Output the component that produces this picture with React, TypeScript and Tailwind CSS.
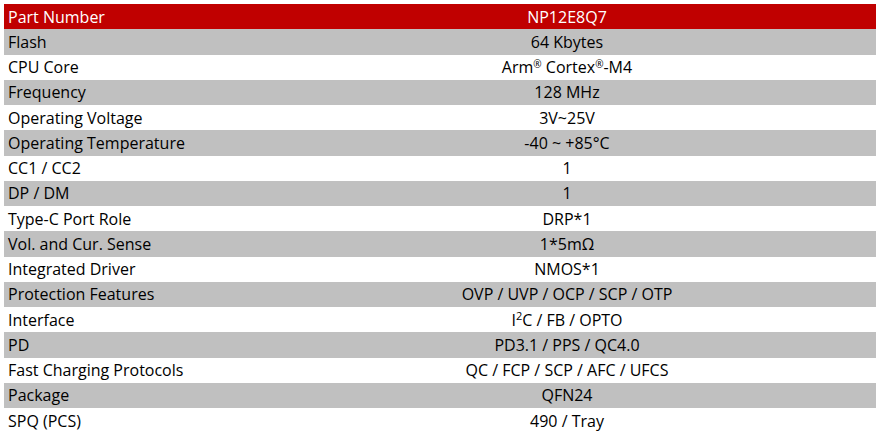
import React from 'react';

type Row = { label: string; value: React.ReactNode };

const Reg = () => <sup className="text-[10px]">®</sup>;

const rows: Row[] = [
  { label: 'Flash', value: '64 Kbytes' },
  { label: 'CPU Core', value: <>Arm<Reg /> Cortex<Reg />-M4</> },
  { label: 'Frequency', value: '128 MHz' },
  { label: 'Operating Voltage', value: '3V~25V' },
  { label: 'Operating Temperature', value: '-40 ~ +85°C' },
  { label: 'CC1 / CC2', value: '1' },
  { label: 'DP / DM', value: '1' },
  { label: 'Type-C Port Role', value: 'DRP*1' },
  { label: 'Vol. and Cur. Sense', value: '1*5mΩ' },
  { label: 'Integrated Driver', value: 'NMOS*1' },
  { label: 'Protection Features', value: 'OVP / UVP / OCP / SCP / OTP' },
  { label: 'Interface', value: <>I<sup className="text-[11px]">2</sup>C / FB / OPTO</> },
  { label: 'PD', value: 'PD3.1 / PPS / QC4.0' },
  { label: 'Fast Charging Protocols', value: 'QC / FCP / SCP / AFC / UFCS' },
  { label: 'Package', value: 'QFN24' },
  { label: 'SPQ (PCS)', value: '490 / Tray' },
];

export default function App() {
  return (
    <div className="w-[882px] h-[438px] bg-white pt-1 pl-1" style={{ fontFamily: '"Open Sans", sans-serif' }}>
      <div className="w-[872px] text-[16px] text-black">
        {/* header */}
        <div className="grid grid-cols-[254px_1fr] h-[25.25px] items-center bg-[#c00000] text-white">
          <div className="px-1 whitespace-nowrap">Part Number</div>
          <div className="text-center">NP12E8Q7</div>
        </div>

        {rows.map((r, i) => (
          <div
            key={r.label}
            className={
              'grid grid-cols-[254px_1fr] h-[25.25px] items-center ' +
              (i % 2 === 0 ? 'bg-[#c0c0c0]' : 'bg-white')
            }
          >
            <div className="px-1 whitespace-nowrap">{r.label}</div>
            <div className="text-center whitespace-nowrap">{r.value}</div>
          </div>
        ))}
      </div>
    </div>
  );
}
